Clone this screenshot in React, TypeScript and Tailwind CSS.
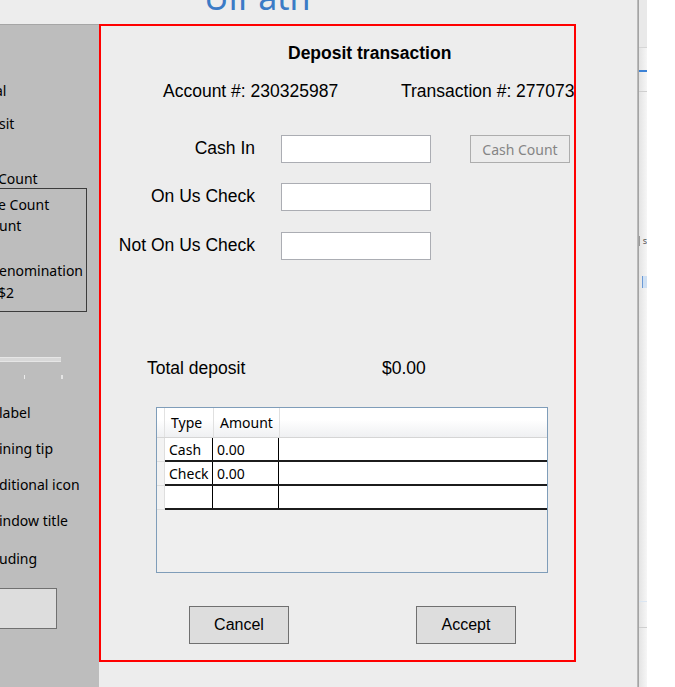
import React from "react";

type P = { children?: React.ReactNode; className?: string };

const L = ({ children, className = "" }: P) => (
  <div className={`h-[20px] leading-[22px] whitespace-nowrap ${className}`}>{children}</div>
);

function LeftPanel() {
  return (
    <div className="w-[99px] h-[663px] shrink-0 bg-[#bdbdbd] border-t border-[#a6a6a6] flex flex-col overflow-hidden font-['Noto_Sans',sans-serif] text-[14px] text-black">
      <L className="mt-[55px] ml-[-5px]">al</L>
      <L className="mt-[13px] ml-[-1px]">sit</L>
      <L className="mt-[35px] ml-[-2px]">Count</L>
      <div className="ml-[-10px] w-[97px] h-[124px] shrink-0 border border-[#3c3c3c] pl-[9px] flex flex-col">
        <L className="mt-[5px] ml-[-2px]">e Count</L>
        <L className="mt-[1px] ml-[-1px]">unt</L>
        <L className="mt-[25px] ml-[-1px]">enomination</L>
        <L className="mt-[2px] ml-[-2px]">$2</L>
      </div>
      <div className="mt-[45px] w-[61px] h-[5px] shrink-0 bg-[#d8d8d8] border-y border-[#e6e6e6]" />
      <div className="mt-[13px] h-[4px] shrink-0 flex">
        <div className="ml-[24px] w-px h-[4px] bg-[#ececec]" />
        <div className="ml-[36px] w-[2px] h-[4px] bg-[#e4e4e4]" />
      </div>
      <L className="mt-[23px] ml-[-1px]">label</L>
      <L className="mt-[16px] ml-[-1px]">ining tip</L>
      <L className="mt-[16px] ml-[-1px]">ditional icon</L>
      <L className="mt-[16px] ml-[-1px]">indow title</L>
      <L className="mt-[18px] ml-[-1px]">uding</L>
      <div className="mt-[20px] ml-[-10px] w-[67px] h-[41px] shrink-0 bg-[#dddddd] border border-[#707070]" />
    </div>
  );
}

const Input = () => <div className="w-[150px] h-[28px] shrink-0 bg-white border border-[#abadb3]" />;

function FormRow({ label, mt, extra }: { label: string; mt: string; extra?: React.ReactNode }) {
  return (
    <div className={`${mt} h-[28px] shrink-0 flex items-center`}>
      <div className="w-[154px] shrink-0 text-right whitespace-nowrap leading-[24px] mt-[-3px]">{label}</div>
      <div className="ml-[26px]">
        <Input />
      </div>
      {extra}
    </div>
  );
}

function Table() {
  const rows = [
    ["Cash", "0.00"],
    ["Check", "0.00"],
    ["", ""],
  ];
  return (
    <div className="mt-[27px] ml-[55px] w-[392px] h-[166px] shrink-0 border border-[#7f9db9] bg-[#efefef] flex flex-col font-['Noto_Sans',sans-serif] text-[14px] text-black">
      <div className="h-[30px] shrink-0 flex bg-linear-to-b from-white from-40% to-[#eff0f2] border-b border-[#d5d5d5]">
        <div className="w-[8px] shrink-0 border-r border-[#e2e2e2]" />
        <div className="w-[49px] shrink-0 border-r border-[#e0e0e0] pl-[6px] leading-[30px]">Type</div>
        <div className="w-[66px] shrink-0 border-r border-[#e0e0e0] pl-[6px] leading-[30px]">Amount</div>
        <div className="flex-1" />
      </div>
      {rows.map((r, i) => (
        <div key={i} className="h-[24px] shrink-0 flex">
          <div className="w-[8px] shrink-0 bg-[#f3f3f3] border-r border-b border-[#dedede]" />
          <div className="flex-1 flex bg-white border-b-2 border-[#1c1c1c]">
            <div className="w-[48px] shrink-0 border-r border-black pl-[4px] leading-[24px] whitespace-nowrap">{r[0]}</div>
            <div className="w-[66px] shrink-0 border-r border-black pl-[4px] leading-[24px]">{r[1]}</div>
            <div className="flex-1" />
          </div>
        </div>
      ))}
    </div>
  );
}

function RedBox() {
  return (
    <div className="w-[477px] h-[638px] shrink-0 border-2 border-[#ff0000] flex flex-col overflow-hidden font-['Liberation_Sans',Arial,sans-serif] text-[17.5px] text-black">
      <div className="mt-[15px] h-[24px] leading-[24px] pl-[187px] font-bold whitespace-nowrap">Deposit transaction</div>
      <div className="mt-[14px] h-[24px] leading-[24px] pl-[62px] flex whitespace-nowrap">
        <span className="w-[238px] shrink-0">Account #: 230325987</span>
        <span className="shrink-0">Transaction #: 277073</span>
      </div>
      <FormRow
        label="Cash In"
        mt="mt-[32px]"
        extra={
          <div className="ml-[39px] w-[100px] h-[28px] shrink-0 border border-[#adadad] bg-[#ececec] flex items-center justify-center font-['Noto_Sans',sans-serif] text-[14px] text-[#858585]">
            Cash Count
          </div>
        }
      />
      <FormRow label="On Us Check" mt="mt-[20px]" />
      <FormRow label="Not On Us Check" mt="mt-[21px]" />
      <div className="mt-[96px] h-[24px] leading-[24px] pl-[46px] flex whitespace-nowrap">
        <span className="w-[235px] shrink-0">Total deposit</span>
        <span>$0.00</span>
      </div>
      <Table />
      <div className="mt-[33px] h-[38px] shrink-0 flex text-[16px]">
        <div className="ml-[88px] w-[100px] h-[38px] bg-[#dddddd] border border-[#707070] flex items-center justify-center">Cancel</div>
        <div className="ml-[127px] w-[100px] h-[38px] bg-[#dddddd] border border-[#707070] flex items-center justify-center">Accept</div>
      </div>
    </div>
  );
}

function RightStrip() {
  return (
    <div className="flex-1 flex h-[687px]">
      <div className="w-px bg-[#bababa]" />
      <div className="w-px bg-[#a4a4a4]" />
      <div className="w-[8px] bg-linear-to-r from-[#e4e4e4] to-[#f6f6f6] flex flex-col">
        <div className="h-[48px] shrink-0 bg-[#e9e9e9] border-b border-[#d6d6d6]" />
        <div className="mt-[22px] h-[2px] shrink-0 bg-[#3c82d6]" />
        <div className="mt-[19px] h-px shrink-0 bg-[#cfcfcf]" />
        <div className="mt-[143px] h-[12px] shrink-0 flex items-center">
          <div className="w-px h-[10px] bg-[#9a9a9a]" />
          <span className="ml-[3px] text-[9px] leading-[12px] text-[#555] font-['Noto_Sans',sans-serif]">s</span>
        </div>
        <div className="mt-[29px] ml-[3px] w-[5px] h-[12px] shrink-0 bg-[#cfe0f3] border-l border-[#6b9ad6]" />
        <div className="mt-[313px] h-px shrink-0 bg-[#dbe6f2]" />
        <div className="mt-[25px] h-px shrink-0 bg-[#cfcfcf]" />
      </div>
      <div className="flex-1 bg-white" />
    </div>
  );
}

export default function App() {
  return (
    <div className="w-[675px] h-[687px] bg-[#ededed] flex overflow-hidden">
      <div className="w-[637px] shrink-0 flex flex-col">
        <div className="h-[24px] shrink-0 overflow-hidden">
          <div className="ml-[204px] mt-[-20px] text-[34px] leading-[34px] text-[#3b7bc6] font-['Noto_Sans',sans-serif] whitespace-nowrap">
            UiPath
          </div>
        </div>
        <div className="flex">
          <LeftPanel />
          <RedBox />
        </div>
      </div>
      <RightStrip />
    </div>
  );
}
